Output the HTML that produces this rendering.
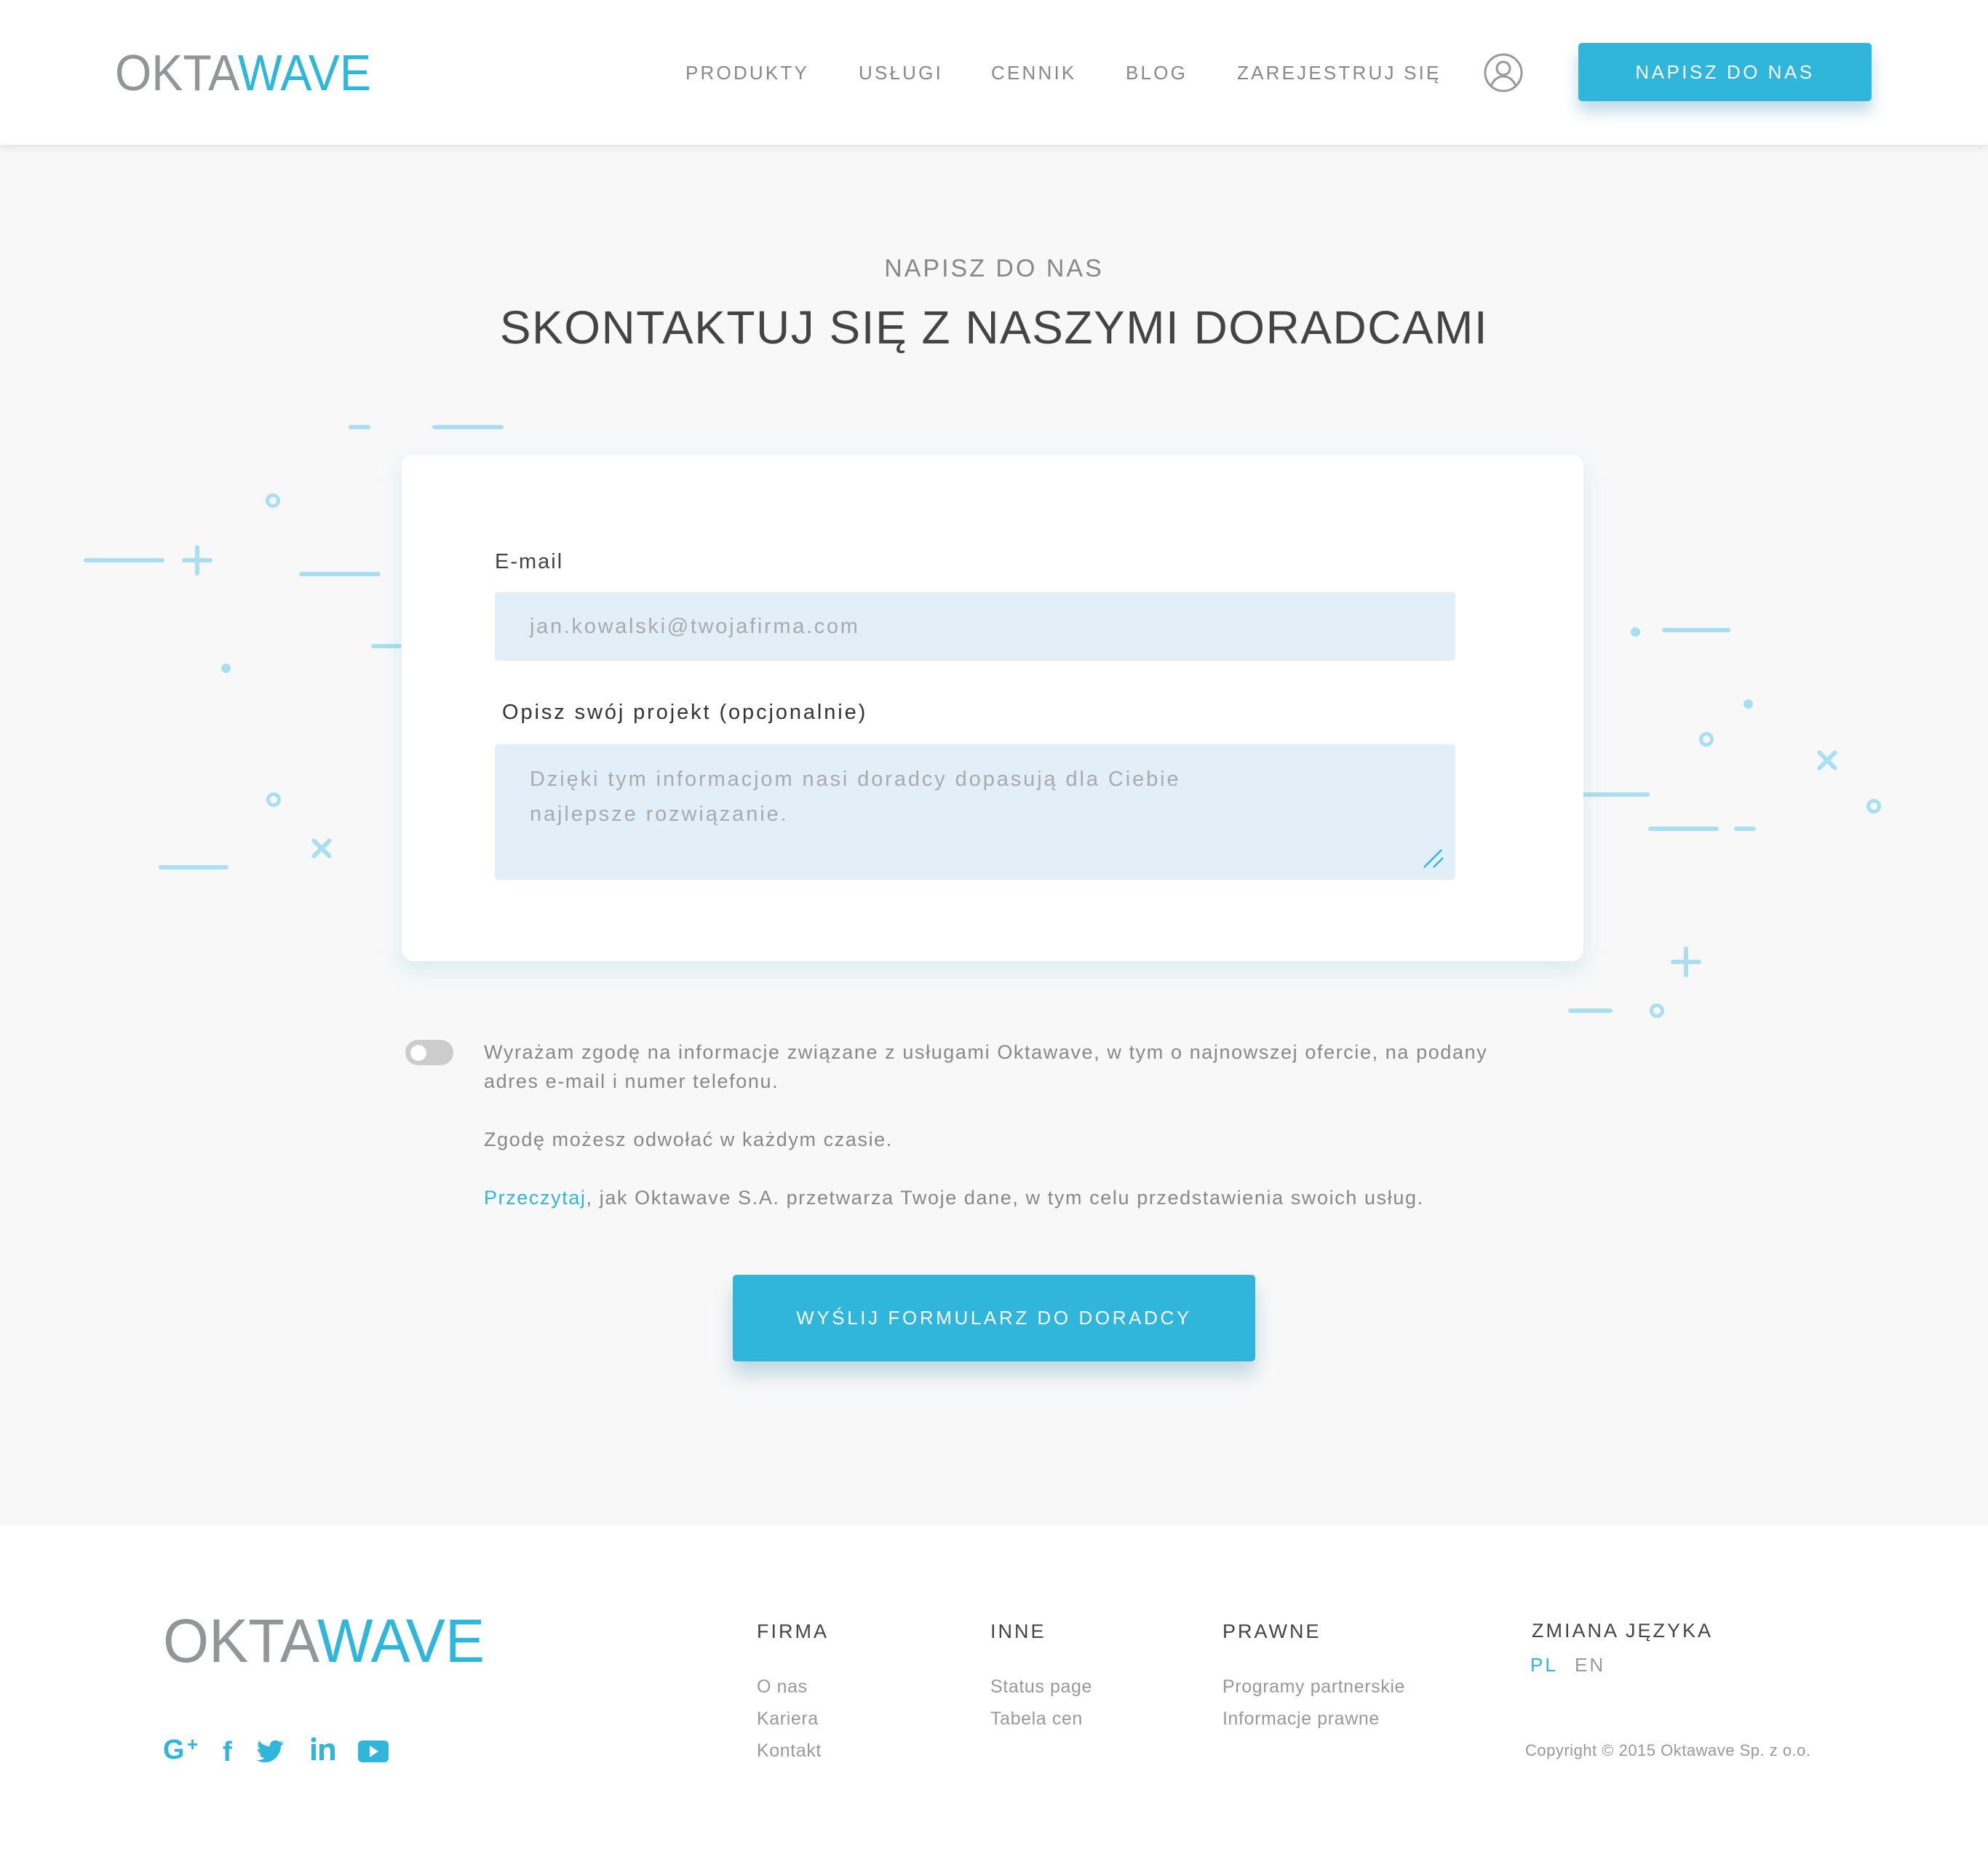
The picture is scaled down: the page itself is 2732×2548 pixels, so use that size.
<!DOCTYPE html>
<html><head><meta charset="utf-8">
<style>
*{margin:0;padding:0;box-sizing:border-box}
body{width:2732px;height:2548px;position:relative;background:#fff;font-family:"Liberation Sans",sans-serif;overflow:hidden}
.a{position:absolute;white-space:nowrap;line-height:1}
.nav{font-size:26px;letter-spacing:3.2px;color:#888;top:87px}
.main{position:absolute;left:0;top:199px;width:2732px;height:1897px;background:#f8f8f8}
.hdr{position:absolute;left:0;top:0;width:2732px;height:199px;background:#fff;box-shadow:0 2px 12px rgba(0,0,0,.12);z-index:2}
.d{position:absolute;background:#a9dff0;border-radius:4px}
.c{position:absolute;border:5px solid #a9dff0;border-radius:50%;width:20px;height:20px}
.dot{position:absolute;background:#a9dff0;border-radius:50%;width:13px;height:13px}
.ft{font-size:27px;letter-spacing:3px;color:#444}
.fl{font-size:25px;color:#999;letter-spacing:0.6px}
.ct{font-size:27px;color:#888;letter-spacing:1.6px}
</style></head><body>
<div class="main"></div>
<div class="hdr">
<svg class="a" style="left:158px;top:66px" width="360" height="66"><text x="0" y="58" font-family="Liberation Sans" font-size="70" textLength="352" lengthAdjust="spacingAndGlyphs"><tspan fill="#939598">OKTA</tspan><tspan fill="#2fb6da">WAVE</tspan></text></svg>
<div class="a nav" style="left:942px">PRODUKTY</div>
<div class="a nav" style="left:1180px">USŁUGI</div>
<div class="a nav" style="left:1362px">CENNIK</div>
<div class="a nav" style="left:1547px">BLOG</div>
<div class="a nav" style="left:1700px">ZAREJESTRUJ SIĘ</div>
<svg class="a" style="left:2038px;top:72px" width="56" height="56" viewBox="0 0 56 56" fill="none" stroke="#999" stroke-width="3"><circle cx="28" cy="28" r="25"/><circle cx="28" cy="22" r="9"/><path d="M11 46c4-9 10-13 17-13s13 4 17 13"/></svg>
<div class="a" style="left:2169px;top:59px;width:403px;height:80px;background:#2fb6da;border-radius:5px;box-shadow:0 14px 20px rgba(47,130,170,.3);color:#fff;font-size:26px;letter-spacing:3.5px;text-align:center;line-height:80px">NAPISZ DO NAS</div>
</div>

<div class="a" style="left:0;width:2732px;text-align:center;top:352px;font-size:34px;letter-spacing:3px;color:#888">NAPISZ DO NAS</div>
<div class="a" style="left:0;width:2732px;text-align:center;top:418px;font-size:64px;letter-spacing:1.5px;color:#444">SKONTAKTUJ SIĘ Z NASZYMI DORADCAMI</div>

<!-- decorations -->
<div class="d" style="left:479px;top:584px;width:30px;height:6px"></div>
<div class="d" style="left:594px;top:584px;width:98px;height:6px"></div>
<div class="c" style="left:365px;top:678px"></div>
<div class="d" style="left:115px;top:767px;width:111px;height:6px"></div>
<div class="d" style="left:250px;top:767px;width:42px;height:6px"></div>
<div class="d" style="left:268px;top:749px;width:6px;height:42px"></div>
<div class="d" style="left:411px;top:786px;width:112px;height:6px"></div>
<div class="d" style="left:510px;top:885px;width:42px;height:6px"></div>
<div class="dot" style="left:304px;top:912px"></div>
<div class="c" style="left:366px;top:1089px"></div>
<div class="d" style="left:424px;top:1163px;width:36px;height:6px;transform:rotate(45deg)"></div>
<div class="d" style="left:424px;top:1163px;width:36px;height:6px;transform:rotate(-45deg)"></div>
<div class="d" style="left:218px;top:1189px;width:96px;height:6px"></div>
<div class="dot" style="left:2241px;top:862px"></div>
<div class="d" style="left:2284px;top:863px;width:94px;height:6px"></div>
<div class="dot" style="left:2396px;top:961px"></div>
<div class="c" style="left:2335px;top:1006px"></div>
<div class="d" style="left:2493px;top:1042px;width:36px;height:6px;transform:rotate(45deg)"></div>
<div class="d" style="left:2493px;top:1042px;width:36px;height:6px;transform:rotate(-45deg)"></div>
<div class="c" style="left:2565px;top:1098px"></div>
<div class="d" style="left:2170px;top:1089px;width:97px;height:6px"></div>
<div class="d" style="left:2265px;top:1136px;width:97px;height:6px"></div>
<div class="d" style="left:2383px;top:1136px;width:30px;height:6px"></div>
<div class="d" style="left:2296px;top:1319px;width:42px;height:6px"></div>
<div class="d" style="left:2314px;top:1301px;width:6px;height:42px"></div>
<div class="d" style="left:2155px;top:1386px;width:61px;height:6px"></div>
<div class="c" style="left:2267px;top:1379px"></div>

<!-- card -->
<div class="a" style="left:552px;top:625px;width:1624px;height:696px;background:#fff;border-radius:16px;box-shadow:0 12px 30px rgba(100,190,220,.22)"></div>
<div class="a" style="left:680px;top:758px;font-size:29px;color:#444;letter-spacing:2px">E-mail</div>
<div class="a" style="left:680px;top:814px;width:1320px;height:94px;background:#e2eff8;border-radius:4px"></div>
<div class="a" style="left:728px;top:847px;font-size:29px;color:#aaa;letter-spacing:2.7px">jan.kowalski@twojafirma.com</div>
<div class="a" style="left:690px;top:965px;font-size:29px;color:#333;letter-spacing:2.9px">Opisz swój projekt (opcjonalnie)</div>
<div class="a" style="left:680px;top:1023px;width:1320px;height:186px;background:#e2eff8;border-radius:4px"></div>
<div class="a" style="left:728px;top:1047px;font-size:29px;color:#aaa;letter-spacing:2.9px;line-height:48px">Dzięki tym informacjom nasi doradcy dopasują dla Ciebie<br>najlepsze rozwiązanie.</div>
<svg class="a" style="left:1955px;top:1165px" width="40" height="30"><path d="M2 27L26 3M15 27L28 14" stroke="#2fb6da" stroke-width="2.5"/></svg>

<!-- consent -->
<div class="a" style="left:557px;top:1429px;width:66px;height:35px;background:#ccc;border-radius:18px"></div>
<div class="a" style="left:564px;top:1436px;width:22px;height:22px;background:#fff;border-radius:50%"></div>
<div class="a ct" style="left:665px;top:1426px;line-height:40px">Wyrażam zgodę na informacje związane z usługami Oktawave, w tym o najnowszej ofercie, na podany<br>adres e-mail i numer telefonu.</div>
<div class="a ct" style="left:665px;top:1553px">Zgodę możesz odwołać w każdym czasie.</div>
<div class="a ct" style="left:665px;top:1633px"><span style="color:#2fb6da">Przeczytaj</span>, jak Oktawave S.A. przetwarza Twoje dane, w tym celu przedstawienia swoich usług.</div>

<div class="a" style="left:1007px;top:1752px;width:718px;height:119px;background:#2fb6da;border-radius:5px;box-shadow:0 18px 26px rgba(47,130,170,.28);color:#fff;font-size:26px;letter-spacing:3.6px;text-align:center;line-height:119px">WYŚLIJ FORMULARZ DO DORADCY</div>

<!-- footer -->
<svg class="a" style="left:224px;top:2214px" width="450" height="76"><text x="0" y="70" font-family="Liberation Sans" font-size="84" textLength="442" lengthAdjust="spacingAndGlyphs"><tspan fill="#939598">OKTA</tspan><tspan fill="#2fb6da">WAVE</tspan></text></svg>
<svg class="a" style="left:224px;top:2384px" width="320" height="40" fill="#2fb6da">
<text x="0" y="33" font-family="Liberation Sans" font-weight="bold" font-size="38">G</text>
<text x="33" y="22" font-family="Liberation Sans" font-weight="bold" font-size="26">+</text>
<text x="82" y="36" font-family="Liberation Sans" font-weight="bold" font-size="38">f</text>
<path d="M132 8c2 4 8 8 15 8c-1-7 8-11 13-6c2 0 4-1 5-2c-1 2-2 3-3 4c1 0 3 0 4-1c-1 2-2 3-4 4c0 12-9 23-22 23c-4 0-8-1-11-3c4 0 8-1 11-3c-4 0-6-2-7-5h3c-4-1-6-4-6-8c1 1 3 1 4 1c-4-3-4-7-2-12z"/>
<rect x="204" y="13" width="6" height="22"/><circle cx="207" cy="7" r="3.5"/>
<path d="M215 13h6v3c2-3 5-4 8-4c5 0 7 3 7 8v15h-6v-13c0-3-1-5-4-5s-5 2-5 5v13h-6z"/>
<rect x="268" y="8" width="42" height="30" rx="6"/><path d="M284 15l12 8-12 8z" fill="#fff"/>
</svg>
<div class="a ft" style="left:1040px;top:2229px">FIRMA</div>
<div class="a ft" style="left:1361px;top:2229px">INNE</div>
<div class="a ft" style="left:1680px;top:2229px">PRAWNE</div>
<div class="a ft" style="left:2105px;top:2228px">ZMIANA JĘZYKA</div>
<div class="a" style="left:2103px;top:2275px;font-size:26px;letter-spacing:3px;color:#2fb6da">PL</div>
<div class="a" style="left:2164px;top:2275px;font-size:26px;letter-spacing:3px;color:#999">EN</div>
<div class="a fl" style="left:1040px;top:2296px;line-height:44px">O nas<br>Kariera<br>Kontakt</div>
<div class="a fl" style="left:1361px;top:2296px;line-height:44px">Status page<br>Tabela cen</div>
<div class="a fl" style="left:1680px;top:2296px;line-height:44px">Programy partnerskie<br>Informacje prawne</div>
<div class="a" style="left:2096px;top:2395px;font-size:22px;color:#999;letter-spacing:0.5px">Copyright © 2015 Oktawave Sp. z o.o.</div>
</body></html>
